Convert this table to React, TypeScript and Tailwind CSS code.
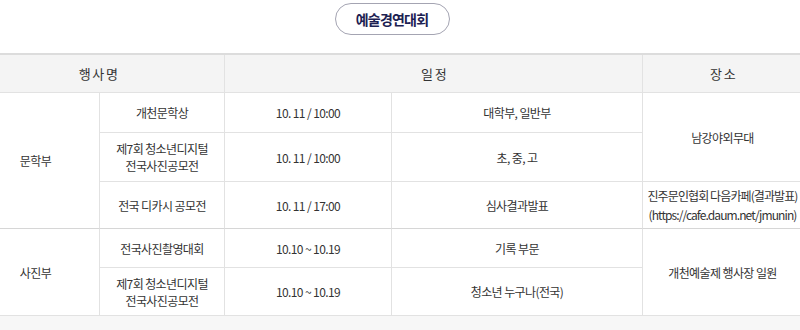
import React from 'react';

const font = { fontFamily: '"Noto Sans CJK KR", "Noto Sans", sans-serif' };

// cell base: centered text, thin grid lines
const cell = 'flex items-center justify-center text-center border-b border-[#e2e2e2] text-[12px] leading-[17px] text-[#333] tracking-[-0.6px]';
const head = 'bg-[#f4f4f4] text-[13px] tracking-[-0.5px] text-[#222]';

function App() {
  return (
    <div className="w-[800px] h-[330px] bg-white overflow-hidden" style={font}>
      <div className="flex justify-center pt-[3px] pr-[16px] h-[53px]">
        <div className="w-[115px] h-[32px] rounded-full border border-[#a4a4b2] flex items-center justify-center text-[14px] font-bold text-[#1c2152] tracking-[-0.8px]">
          예술경연대회
        </div>
      </div>

      <div className="ml-[-28px] w-[830px] border-t-2 border-[#dcdcdc] grid grid-cols-[127px_125px_167px_251px_160px] grid-rows-[38px_40px_49px_47px_39px_48px]">
        {/* header */}
        <div className={`${cell} ${head} col-span-2`}>행 사 명</div>
        <div className={`${cell} ${head} col-span-2 border-l`}>일 정</div>
        <div className={`${cell} ${head} border-l`}>장 소</div>

        {/* 문학부 */}
        <div className={`${cell} row-span-3 border-b-[#d6d6d6]`}>문학부</div>
        <div className={`${cell} border-l`}>개천문학상</div>
        <div className={`${cell} border-l tracking-[-0.3px]`}>10. 11 / 10:00</div>
        <div className={`${cell} border-l`}>대학부, 일반부</div>
        <div className={`${cell} row-span-2 border-l`}>남강야외무대</div>

        <div className={`${cell} border-l`}>제7회 청소년디지털<br />전국사진공모전</div>
        <div className={`${cell} border-l tracking-[-0.3px]`}>10. 11 / 10:00</div>
        <div className={`${cell} border-l`}>초, 중, 고</div>

        <div className={`${cell} border-l border-b-[#d6d6d6]`}>전국 디카시 공모전</div>
        <div className={`${cell} border-l border-b-[#d6d6d6] tracking-[-0.3px]`}>10. 11 / 17:00</div>
        <div className={`${cell} border-l border-b-[#d6d6d6]`}>심사결과발표</div>
        <div className={`${cell} border-l border-b-[#d6d6d6] leading-[19px] text-[11.5px] tracking-[-0.9px]`}>진주문인협회 다음카페(결과발표)<br />(https://cafe.daum.net/jmunin)</div>

        {/* 사진부 */}
        <div className={`${cell} row-span-2`}>사진부</div>
        <div className={`${cell} border-l`}>전국사진촬영대회</div>
        <div className={`${cell} border-l tracking-[-0.3px]`}>10.10 ~ 10.19</div>
        <div className={`${cell} border-l`}>기록 부문</div>
        <div className={`${cell} row-span-2 border-l`}>개천예술제 행사장 일원</div>

        <div className={`${cell} border-l`}>제7회 청소년디지털<br />전국사진공모전</div>
        <div className={`${cell} border-l tracking-[-0.3px]`}>10.10 ~ 10.19</div>
        <div className={`${cell} border-l`}>청소년 누구나(전국)</div>
      </div>
      <div className="h-[20px] bg-[#f7f7f7]" />
    </div>
  );
}

export default App;
